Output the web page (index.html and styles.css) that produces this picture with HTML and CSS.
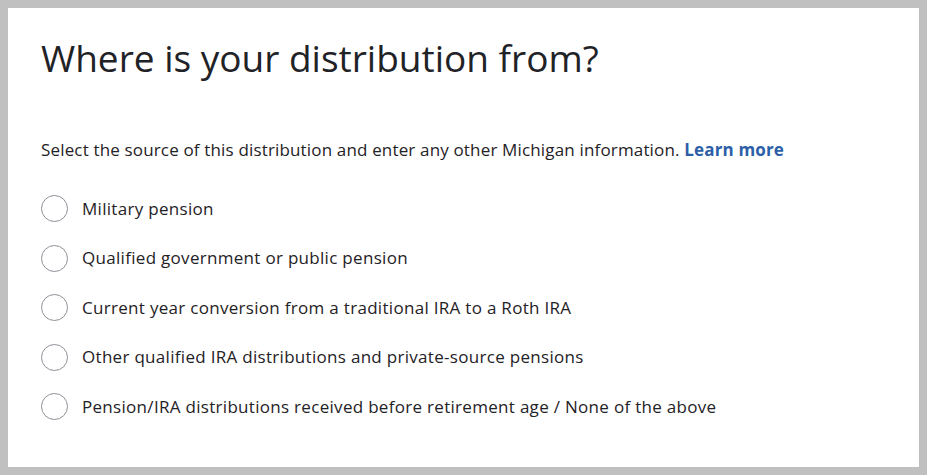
FILE: index.html
```html
<!DOCTYPE html>
<html lang="en">
<head>
<meta charset="utf-8">
<title>Where is your distribution from?</title>
<link rel="stylesheet" href="styles.css">
</head>
<body>
<main class="panel">
  <h1 class="title">Where is your distribution from?</h1>
  <p class="intro">Select the source of this distribution and enter any other Michigan information. <a class="link" href="#">Learn more</a></p>
  <div class="options">
    <label class="option"><span class="radio"></span><span class="label">Military pension</span></label>
    <label class="option"><span class="radio"></span><span class="label">Qualified government or public pension</span></label>
    <label class="option"><span class="radio"></span><span class="label">Current year conversion from a traditional IRA to a Roth IRA</span></label>
    <label class="option"><span class="radio"></span><span class="label">Other qualified IRA distributions and private-source pensions</span></label>
    <label class="option"><span class="radio"></span><span class="label">Pension/IRA distributions received before retirement age / None of the above</span></label>
  </div>
</main>
</body>
</html>
```
FILE: styles.css
```css
html, body { margin: 0; padding: 0; }
body {
  background: #c0c0c0;
  padding: 8px;
  height: 475px;
  box-sizing: border-box;
  font-family: "Open Sans", Lato, sans-serif;
  color: #1f2226;
}
.panel {
  background: #fff;
  height: 459px;
  box-sizing: border-box;
  padding: 26px 33px 0 33px;
}
.title {
  margin: 0;
  font-size: 37px;
  font-weight: 400;
  line-height: 48px;
  letter-spacing: 0;
}
.intro {
  margin: 56px 0 0 0;
  font-size: 17px;
  line-height: 24px;
  letter-spacing: 0.16px;
}
.link {
  color: #2d5fa8;
  font-weight: 700;
  text-decoration: none;
}
.options {
  display: flex;
  flex-direction: column;
  gap: 22.5px;
  margin-top: 33px;
}
.option {
  display: flex;
  align-items: center;
  gap: 14px;
  font-size: 17px;
  line-height: 26px;
  letter-spacing: 0.3px;
}
.radio {
  width: 25px;
  height: 25px;
  border: 1px solid #8d9096;
  border-radius: 50%;
  flex: none;
}
```
